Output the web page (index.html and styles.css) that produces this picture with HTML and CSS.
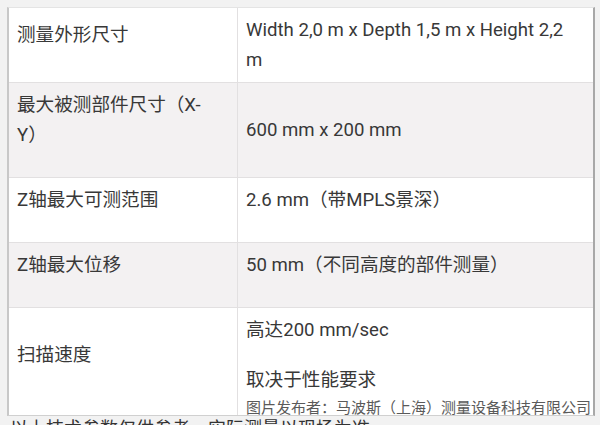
FILE: index.html
```html
<!DOCTYPE html>
<html lang="zh">
<head>
<meta charset="utf-8">
<link rel="stylesheet" href="styles.css">
</head>
<body>
<div class="frame">
  <table class="spec">
    <tr class="odd">
      <td class="k"><p>测量外形尺寸</p></td>
      <td class="v">Width 2,0 m x Depth 1,5 m x Height 2,2 m</td>
    </tr>
    <tr class="even">
      <td class="k"><p>最大被测部件尺寸（X-Y）</p></td>
      <td class="v">600 mm x 200 mm</td>
    </tr>
    <tr class="odd">
      <td class="k"><p>Z轴最大可测范围</p></td>
      <td class="v"><p>2.6 mm（带MPLS景深）</p></td>
    </tr>
    <tr class="even">
      <td class="k"><p>Z轴最大位移</p></td>
      <td class="v"><p>50 mm（不同高度的部件测量）</p></td>
    </tr>
    <tr class="odd">
      <td class="k"><p>扫描速度</p></td>
      <td class="v"><p>高达200 mm/sec</p><p>取决于性能要求</p></td>
    </tr>
  </table>
  <div class="credit">图片发布者：马波斯（上海）测量设备科技有限公司</div>
</div>
<p class="after">以上技术参数仅供参考，实际测量以现场为准</p>
</body>
</html>
```
FILE: styles.css
```css
html, body {
  margin: 0;
  padding: 0;
}
body {
  background: #f2f2f2;
  width: 600px;
  height: 425px;
  overflow: hidden;
  font-family: Roboto, "Noto Sans CJK SC", sans-serif;
  color: #383838;
}
.frame {
  position: relative;
  margin: 7px 5px 0 7px;
  height: 407px;
  overflow: hidden;
  background: #fff;
  border-top: 1px solid #e4e4e4;
  border-left: 2px solid #c8c8c8;
  border-right: 2px solid #a8a8a8;
  border-bottom: 1px solid #d0d0d0;
}
.spec {
  width: 100%;
  border-collapse: collapse;
  font-size: 18.6px;
  line-height: 30px;
}
.spec td {
  padding: 7px 20px 7px 8px;
  border: 1px solid #e2e0e1;
  vertical-align: middle;
}
.spec tr:first-child td {
  border-top: 0;
}
.spec td:first-child {
  border-left: 0;
}
.spec td:last-child {
  border-right: 0;
}
.spec .k {
  width: 200px;
}
.spec p {
  margin: 0 0 20px;
}
.odd {
  background: #fff;
}
.even {
  background: #f3f1f2;
}
.credit {
  position: absolute;
  right: 2px;
  bottom: 0;
  font-family: "Noto Sans CJK SC", sans-serif;
  font-size: 15px;
  line-height: 17px;
  color: #5a5a5a;
}
.after {
  margin: 1px 0 0 10px;
  font-family: "Noto Sans CJK SC", sans-serif;
  font-size: 18px;
  line-height: 20px;
  color: #333;
  white-space: nowrap;
}
```
